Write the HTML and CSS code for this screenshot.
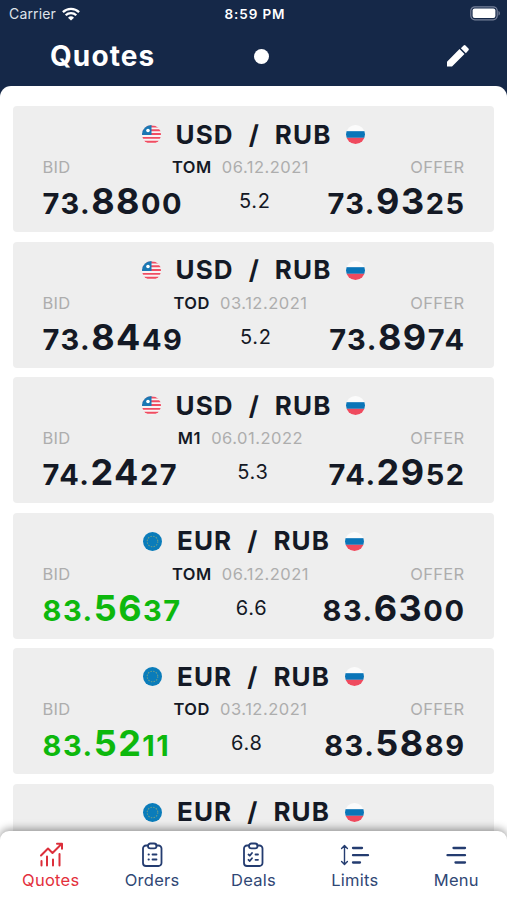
FILE: index.html
```html
<!DOCTYPE html>
<html lang="en">
<head>
  <meta charset="UTF-8">
  <meta name="viewport" content="width=device-width, initial-scale=1.0">
  <title>Quotes</title>
  <link rel="stylesheet" href="styles.css">
</head>
<body>
  <svg class="symbols" width="0" height="0">
    <symbol id="flag-us" viewBox="0 0 20 20">
      <clipPath id="round"><circle cx="10" cy="10" r="10"/></clipPath>
      <g clip-path="url(#round)">
        <rect width="20" height="20" fill="#f8f4f5"/>
        <path d="M0 1.500h20M0 5.500h20M0 9.500h20M0 13.500h20M0 17.700h20" stroke="#f04d62" stroke-width="2"/>
        <rect width="10" height="10.500" fill="#1a78b4"/>
        <circle cx="6.300" cy="5.800" r="1.900" fill="#fff"/>
      </g>
    </symbol>
    <symbol id="flag-eu" viewBox="0 0 20 20">
      <circle cx="10" cy="10" r="10" fill="#0a7cba"/>
      <circle cx="10" cy="10" r="5.600" fill="none" stroke="#6b9d8b" stroke-width="1.100" stroke-dasharray="1.600 1.330"/>
    </symbol>
    <symbol id="flag-ru" viewBox="0 0 20 20">
      <g clip-path="url(#round)">
        <rect width="20" height="20" fill="#fbfbfb"/>
        <rect y="6.500" width="20" height="7" fill="#0a75b8"/>
        <rect y="13.500" width="20" height="7" fill="#ef4a5e"/>
      </g>
    </symbol>
  </svg>

  <div class="app">
    <header class="header">
      <div class="status-bar">
        <div class="carrier">
          <span>Carrier</span>
          <svg width="18" height="14" viewBox="0 0 18 14" fill="none" stroke="#fff" stroke-width="2.300">
            <path d="M.9 5.100a11.600 11.600 0 0 1 16.200 0M3.700 8.200a7.600 7.600 0 0 1 10.600 0"/>
            <path d="M9 13.600 6 10.700a4.300 4.300 0 0 1 6 0z" fill="#fff" stroke="none"/>
          </svg>
        </div>
        <div class="clock">8:59 PM</div>
        <div class="battery">
          <svg width="31" height="15" viewBox="0 0 31 15">
            <rect x=".8" y=".8" width="26.400" height="13" rx="4" fill="none" stroke="#77819a" stroke-width="1.200"/>
            <rect x="2.600" y="2.600" width="22.800" height="9.400" rx="2" fill="#fff"/>
            <path d="M28.500 5c1.800.6 1.800 4 0 4.600z" fill="#77819a"/>
          </svg>
        </div>
      </div>
      <div class="title-bar">
        <h1>Quotes</h1>
        <span class="dot"></span>
        <svg class="edit" width="30" height="30" viewBox="0 0 24 24" fill="#fff">
          <path d="M3.200 16.600V20.400h4L17.200 10.400l-4-4zM20.400 7.400a1.200 1.200 0 0 0 0-1.500l-2.400-2.400a1.200 1.200 0 0 0-1.500 0l-2.200 2.200 4 4z"/>
        </svg>
      </div>
    </header>

    <main class="quotes">
      <div class="card">
        <div class="pair">
          <svg class="flag"><use href="#flag-us"/></svg>
          <h2><span>USD</span><span>/</span><span>RUB</span></h2>
          <svg class="flag"><use href="#flag-ru"/></svg>
        </div>
        <div class="info"><span>BID</span><span class="date"><b>TOM</b> 06.12.2021</span><span>OFFER</span></div>
        <div class="prices">
          <span class="price">73.<big>88</big>00</span>
          <span class="spread">5.2</span>
          <span class="price">73.<big>93</big>25</span>
        </div>
      </div>

      <div class="card">
        <div class="pair">
          <svg class="flag"><use href="#flag-us"/></svg>
          <h2><span>USD</span><span>/</span><span>RUB</span></h2>
          <svg class="flag"><use href="#flag-ru"/></svg>
        </div>
        <div class="info"><span>BID</span><span class="date"><b>TOD</b> 03.12.2021</span><span>OFFER</span></div>
        <div class="prices">
          <span class="price">73.<big>84</big>49</span>
          <span class="spread">5.2</span>
          <span class="price">73.<big>89</big>74</span>
        </div>
      </div>

      <div class="card">
        <div class="pair">
          <svg class="flag"><use href="#flag-us"/></svg>
          <h2><span>USD</span><span>/</span><span>RUB</span></h2>
          <svg class="flag"><use href="#flag-ru"/></svg>
        </div>
        <div class="info"><span>BID</span><span class="date"><b>M1</b> 06.01.2022</span><span>OFFER</span></div>
        <div class="prices">
          <span class="price">74.<big>24</big>27</span>
          <span class="spread">5.3</span>
          <span class="price">74.<big>29</big>52</span>
        </div>
      </div>

      <div class="card">
        <div class="pair">
          <svg class="flag"><use href="#flag-eu"/></svg>
          <h2><span>EUR</span><span>/</span><span>RUB</span></h2>
          <svg class="flag"><use href="#flag-ru"/></svg>
        </div>
        <div class="info"><span>BID</span><span class="date"><b>TOM</b> 06.12.2021</span><span>OFFER</span></div>
        <div class="prices">
          <span class="price up">83.<big>56</big>37</span>
          <span class="spread">6.6</span>
          <span class="price">83.<big>63</big>00</span>
        </div>
      </div>

      <div class="card">
        <div class="pair">
          <svg class="flag"><use href="#flag-eu"/></svg>
          <h2><span>EUR</span><span>/</span><span>RUB</span></h2>
          <svg class="flag"><use href="#flag-ru"/></svg>
        </div>
        <div class="info"><span>BID</span><span class="date"><b>TOD</b> 03.12.2021</span><span>OFFER</span></div>
        <div class="prices">
          <span class="price up">83.<big>52</big>11</span>
          <span class="spread">6.8</span>
          <span class="price">83.<big>58</big>89</span>
        </div>
      </div>

      <div class="card">
        <div class="pair">
          <svg class="flag"><use href="#flag-eu"/></svg>
          <h2><span>EUR</span><span>/</span><span>RUB</span></h2>
          <svg class="flag"><use href="#flag-ru"/></svg>
        </div>
      </div>
    </main>

    <nav class="tab-bar">
      <a class="tab active">
        <svg width="28" height="28" viewBox="0 0 28 28">
          <path d="M4 14.500 11 7.500l4.500 4.500L24 3.500M20 2.700H25v5M4.500 20v4.500M10 15.500v9M16 18.500v6M22.500 13v11.500"/>
        </svg>
        <span>Quotes</span>
      </a>
      <a class="tab">
        <svg width="28" height="28" viewBox="0 0 28 28">
          <path d="M10 4.500H8a3 3 0 0 0-3 3V22a3 3 0 0 0 3 3h12.500a3 3 0 0 0 3-3V7.500a3 3 0 0 0-3-3h-2"/>
          <rect x="10" y="2.500" width="8.500" height="4.800" rx="2.400"/>
          <path d="M10.500 13.500h.4M14.500 13.500h4M10.500 18.500h.4M14.500 18.500h4"/>
        </svg>
        <span>Orders</span>
      </a>
      <a class="tab">
        <svg width="28" height="28" viewBox="0 0 28 28">
          <path d="M10 4.500H8a3 3 0 0 0-3 3V22a3 3 0 0 0 3 3h12.500a3 3 0 0 0 3-3V7.500a3 3 0 0 0-3-3h-2"/>
          <rect x="10" y="2.500" width="8.500" height="4.800" rx="2.400"/>
          <path d="m9.500 13.500 1.300 1.200 2.200-2.700M16.500 13.500h2.500M9.500 18.800l1.300 1.200 2.200-2.700M16.500 18.800h2.500"/>
        </svg>
        <span>Deals</span>
      </a>
      <a class="tab">
        <svg width="30" height="28" viewBox="0 0 30 28">
          <path d="M4.500 5v18M1.600 7.500l2.900-3 2.900 3M1.600 20.500l2.900 3 2.900-3" stroke-width="1.400"/>
          <path d="M13 7h9M13 14.200h15M13 21.500h7" stroke-width="2.300"/>
        </svg>
        <span>Limits</span>
      </a>
      <a class="tab">
        <svg width="28" height="28" viewBox="0 0 28 28">
          <path d="M11.500 7h11.500M5.500 14.200h17.500M13.500 21.500h9.500" stroke-width="2.300"/>
        </svg>
        <span>Menu</span>
      </a>
    </nav>
  </div>
</body>
</html>
```
FILE: styles.css
```css
* {
  box-sizing: border-box;
}

body {
  margin: 0;
  font-family: Inter, "Liberation Sans", sans-serif;
  color: #141925;
  background-color: #152848;
}

.symbols {
  display: block;
}

.app {
  display: flex;
  flex-direction: column;
  height: 900px;
  overflow: hidden;
}

/* Header */
.header {
  flex: none;
  height: 86px;
  color: #fff;
}

.status-bar {
  display: grid;
  grid-template-columns: 1fr auto 1fr;
  align-items: center;
  height: 27px;
  padding: 0 6px 0 9px;
  font-size: 14px;
}

.carrier {
  display: flex;
  align-items: center;
  gap: 6px;
  color: #dfe3ea;
  letter-spacing: 0.15px;
}

.clock {
  font-size: 13.5px;
  font-weight: 600;
  letter-spacing: 0.9px;
}

.battery {
  display: flex;
  justify-content: flex-end;
}

.title-bar {
  display: grid;
  grid-template-columns: 1fr auto 1fr;
  align-items: center;
  height: 58px;
  padding: 0 34px 0 50px;
}

h1 {
  margin: 0;
  font-size: 28px;
  font-weight: 700;
  line-height: 36px;
  letter-spacing: 1.1px;
}

.dot {
  width: 15px;
  height: 15px;
  border-radius: 50%;
  background-color: #fff;
}

.edit {
  justify-self: end;
}

/* Quote cards */
.quotes {
  flex: 1;
  display: flex;
  flex-direction: column;
  gap: 9.6px;
  min-height: 0;
  padding: 20px 13px 0;
  overflow: hidden;
  border-radius: 11px 11px 0 0;
  background-color: #fff;
}

.card {
  flex: none;
  height: 126px;
  padding: 14.5px 29.5px 0;
  border-radius: 4px;
  background-color: #eee;
}

.pair {
  display: flex;
  align-items: center;
  justify-content: center;
  gap: 15px;
  height: 28px;
}

.flag {
  width: 19px;
  height: 19px;
}

h2 {
  display: flex;
  gap: 15px;
  margin: 0;
  font-size: 26px;
  font-weight: 650;
  line-height: 28px;
  letter-spacing: 1.1px;
}

.info {
  display: flex;
  justify-content: space-between;
  margin-top: 8.5px;
  font-size: 16.5px;
  line-height: 21px;
  letter-spacing: 0.3px;
  color: #adadad;
}

.date {
  letter-spacing: 0.5px;
}

.date b {
  margin-right: 5px;
  font-weight: 600;
  color: #141925;
}

.prices {
  display: flex;
  justify-content: space-between;
  line-height: 46px;
}

.price {
  font-size: 29px;
  font-weight: 650;
  letter-spacing: 1.5px;
  margin-right: -1px;
}

.price big {
  font-size: 36px;
}

.price.up {
  color: #0db80d;
}

.spread {
  font-size: 20px;
  letter-spacing: 0.7px;
}

/* Bottom navigation */
.tab-bar {
  z-index: 1;
  flex: none;
  display: grid;
  grid-template-columns: repeat(5, 1fr);
  height: 69px;
  margin-top: -10px;
  padding-top: 10px;
  border-radius: 9px 9px 0 0;
  background-color: #fff;
  box-shadow: 0 -2px 9px rgba(0, 0, 0, 0.4);
}

.tab {
  display: flex;
  flex-direction: column;
  align-items: center;
  font-size: 16.5px;
  line-height: 22px;
  letter-spacing: 0.25px;
  color: #304775;
}

.tab svg {
  fill: none;
  stroke: #243c70;
  stroke-width: 1.8;
  stroke-linecap: round;
  stroke-linejoin: round;
}

.tab.active {
  color: #e3303c;
}

.tab.active svg {
  stroke: #dc2f3b;
  stroke-width: 2;
}
```
